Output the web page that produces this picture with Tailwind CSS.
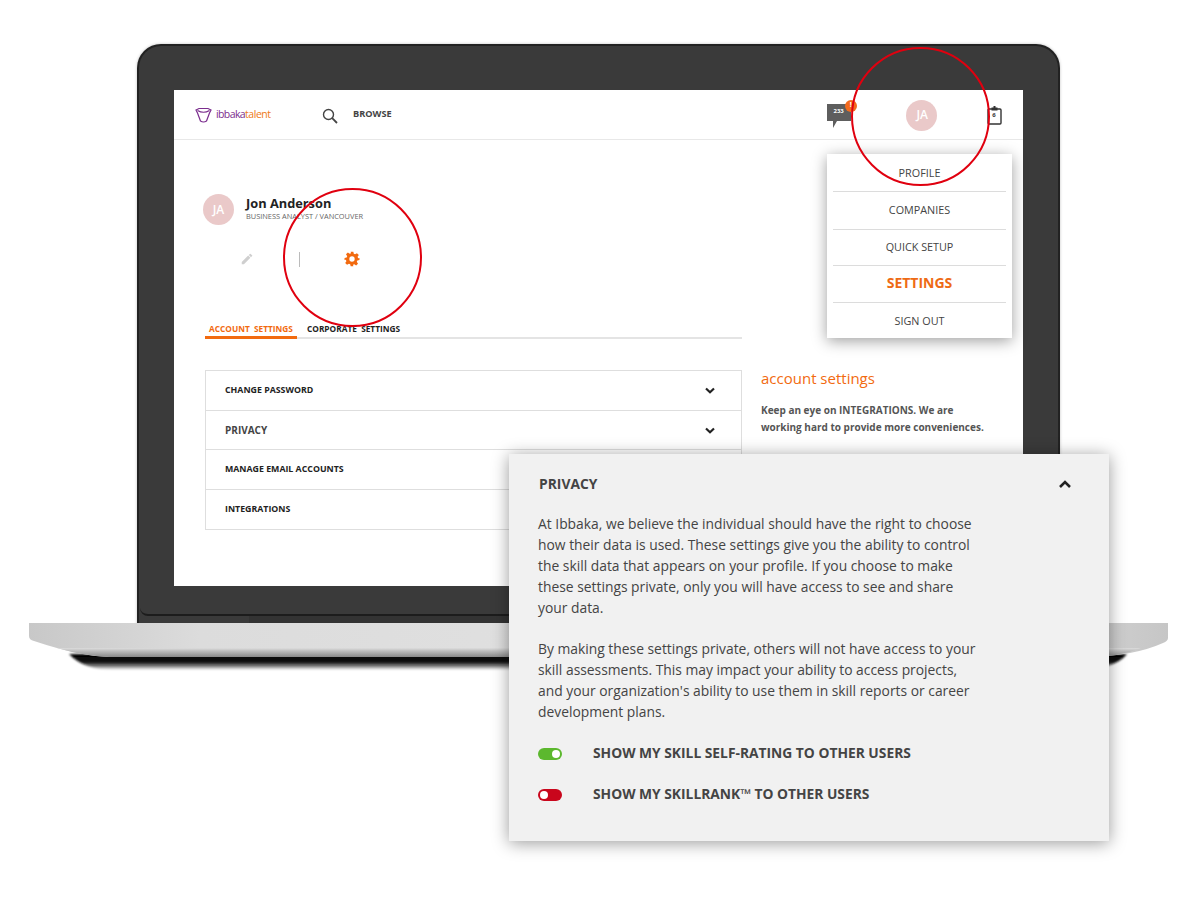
<!DOCTYPE html>
<html>
<head>
<meta charset="utf-8">
<script src="https://cdn.jsdelivr.net/npm/@tailwindcss/browser@4"></script>
</head>
<body class="m-0 bg-white">
<div class="relative w-[1200px] h-[918px] overflow-hidden bg-white font-['Open_Sans',sans-serif] text-[#333]">

  <!-- laptop lid -->
  <div class="absolute left-[137px] top-[44px] w-[923px] h-[581px] bg-[#3a3a3a] rounded-t-[24px] border-[2px] border-b-0 border-[#222] pt-[44px] pl-[35px] shadow-[0_0_3px_rgba(0,0,0,0.25)]">
    <div class="absolute left-[1px] right-[1px] bottom-[9px] h-[16px] rounded-b-[8px] border-b-2 border-[#1c1c1c]"></div>
    <div class="absolute left-[110px] right-0 bottom-0 h-[9px] bg-[#333]"></div>
    <!-- screen -->
    <div class="relative w-[849px] h-[496px] bg-white">
      <!-- app bar -->
      <header class="flex items-center h-[50px] border-b border-[#e8e8e8] pl-[21px]">
        <svg class="w-[17px] h-[16px] mr-[4px]" viewBox="0 0 17 16" fill="none" stroke="#7b2d8e" stroke-width="1.2"><path d="M1 3 L4 1.5 H13 L16 3 L14.5 6 L11.5 14 Q8.5 16 5.5 14 L2.5 6 Z"/><path d="M2.5 3.5 Q8.5 7 14.5 3.5"/></svg>
        <span class="text-[10.5px] tracking-[-0.6px] text-[#7b2d8e] w-[29px]">ibbaka</span><span class="text-[10.5px] tracking-[-0.45px] text-[#ee7a20] w-[25px]">talent</span>
        <svg class="w-[16px] h-[16px] ml-[52px] mt-[3px]" viewBox="0 0 16 16" fill="none" stroke="#444" stroke-width="1.4"><circle cx="6.5" cy="6.5" r="5"/><path d="M10.2 10.2 L15 15" stroke-width="1.8"/></svg>
        <span class="ml-[15px] -mt-[2px] text-[9.2px] font-bold text-[#444]">BROWSE</span>
        <div class="relative ml-[435px] mt-[4px] w-[26px] h-[26px]">
          <svg class="absolute left-0 top-0 w-[26px] h-[26px]" viewBox="0 0 26 26"><path d="M0 0 H24 V17 H10 L6 24 V17 H0 Z" fill="#5e5e5e"/></svg>
          <span class="absolute left-[5px] top-[3px] w-[14px] text-center text-[6px] font-bold text-white">233</span>
          <span class="absolute left-[18px] -top-[4px] w-[12px] h-[12px] rounded-full bg-[#f26b1d] text-white text-[7px] font-bold flex items-center justify-center">!</span>
        </div>
        <div class="ml-[53px] mt-[1px] w-[31px] h-[31px] rounded-full bg-[#eac9c9] text-white text-[12px] font-semibold flex items-center justify-center pl-[2px]">JA</div>
        <svg class="ml-[50px] w-[15px] h-[19px] mt-[2px]" viewBox="0 0 15 19" fill="none"><rect x="1" y="3" width="13" height="15" rx="1" stroke="#333" stroke-width="1.4"/><rect x="4.5" y="1.5" width="6" height="3" fill="#333"/><rect x="6.5" y="0" width="2" height="2" fill="#333"/></svg>
      </header>
      <span class="absolute left-[814px] top-[21px] w-[12px] text-center text-[6px] leading-[8px] font-bold text-[#333]">6</span>

      <!-- content -->
      <div class="pl-[29px] pt-[54px] flex items-center">
        <div class="w-[31px] h-[31px] rounded-full bg-[#eac9c9] text-white text-[12px] font-semibold flex items-center justify-center">JA</div>
        <div class="ml-[12px] -mt-[3px]">
          <div class="text-[12.8px] leading-[15px] font-bold text-[#222]">Jon Anderson</div>
          <div class="text-[7.4px] leading-[10px] text-[#666]">BUSINESS ANALYST / VANCOUVER</div>
        </div>
      </div>
      <div class="flex items-center h-[16px] mt-[26px] pl-[66px]">
        <svg class="w-[14px] h-[14px]" viewBox="0 0 24 24" fill="#cfcfcf"><path d="M3 17.25V21h3.75L17.81 9.94l-3.75-3.75L3 17.25zM20.71 7.04a1 1 0 0 0 0-1.41l-2.34-2.34a1 1 0 0 0-1.41 0l-1.83 1.83 3.75 3.75 1.83-1.83z"/></svg>
        <div class="ml-[45px] w-px h-[15px] bg-[#bbb]"></div>
        <svg class="ml-[44px] w-[16px] h-[16px]" viewBox="0 0 24 24" fill="#f26a0f"><path fill-rule="evenodd" d="M10 1h4l.7 3.2 1.9.8 2.8-1.8 2.8 2.8-1.8 2.8.8 1.9L23.2 10.4v3.2l-3.2.7-.8 1.9 1.8 2.8-2.8 2.8-2.8-1.8-1.9.8L14 23h-4l-.7-3.2-1.9-.8-2.8 1.8-2.8-2.8 1.8-2.8-.8-1.9L.8 13.6v-3.2L4 9.7l.8-1.9L3 5l2.8-2.8L8.6 4l1.9-.8zM12 8a4 4 0 1 0 0 8 4 4 0 0 0 0-8z"/></svg>
      </div>

      <!-- tabs -->
      <div class="ml-[31px] mt-[57px] w-[537px] h-[15px] border-b-2 border-[#e4e4e4] flex">
        <div class="w-[92px] h-[15px] border-b-[3px] border-[#f26a0f] pl-[4px] text-[8.3px] leading-[10px] font-bold text-[#f26a0f] whitespace-pre">ACCOUNT  SETTINGS</div>
        <div class="ml-[10px] text-[8.3px] leading-[10px] font-bold text-[#222] whitespace-pre">CORPORATE  SETTINGS</div>
      </div>

      <div class="flex mt-[31px]">
        <!-- accordion -->
        <div class="ml-[31px] w-[537px] h-[160px] border border-[#dedede] flex flex-col text-[8.8px] font-bold text-[#222]">
          <div class="h-[40px] border-b border-[#dedede] pl-[19px] pr-[26px] flex items-center justify-between">
            <span>CHANGE PASSWORD</span>
            <svg class="w-[10px] h-[7px]" viewBox="0 0 10 7" fill="none" stroke="#222" stroke-width="2.2"><path d="M1 1.5 L5 5.2 L9 1.5"/></svg>
          </div>
          <div class="h-[39px] border-b border-[#dedede] pl-[19px] pr-[26px] flex items-center justify-between text-[#444] text-[10px]">
            <span>PRIVACY</span>
            <svg class="w-[10px] h-[7px]" viewBox="0 0 10 7" fill="none" stroke="#222" stroke-width="2.2"><path d="M1 1.5 L5 5.2 L9 1.5"/></svg>
          </div>
          <div class="h-[40px] border-b border-[#dedede] pl-[19px] flex items-center">MANAGE EMAIL ACCOUNTS</div>
          <div class="h-[39px] pl-[19px] flex items-center">INTEGRATIONS</div>
        </div>
        <!-- aside -->
        <div class="ml-[19px] w-[240px] -mt-[1px]">
          <div class="text-[15px] leading-[18px] text-[#f26a0f]">account settings</div>
          <div class="mt-[15px] text-[10px] leading-[16.5px] font-bold text-[#555]">Keep an eye on INTEGRATIONS. We are<br>working hard to provide more conveniences.</div>
        </div>
      </div>
    </div>
  </div>

  <!-- laptop base -->
  <svg class="absolute left-[29px] top-[620px] w-[1140px] h-[52px]" viewBox="0 0 1140 52">
    <defs>
      <linearGradient id="baseH" x1="0" x2="1" y1="0" y2="0"><stop offset="0" stop-color="#c8c8c8"/><stop offset="0.15" stop-color="#dcdcdc"/><stop offset="0.8" stop-color="#e4e4e4"/><stop offset="1" stop-color="#c6c6c6"/></linearGradient>
      <linearGradient id="baseV" x1="0" x2="0" y1="0" y2="1"><stop offset="0" stop-color="#dcdcdc"/><stop offset="0.35" stop-color="#bdbdbd"/><stop offset="1" stop-color="#8a8a8a"/></linearGradient>
      <linearGradient id="shade" x1="0" x2="0" y1="0" y2="1"><stop offset="0" stop-color="#000"/><stop offset="0.5" stop-color="#111"/><stop offset="1" stop-color="#000" stop-opacity="0"/></linearGradient>
      <filter id="blur"><feGaussianBlur stdDeviation="0.9"/></filter>
    </defs>
    <path d="M40 34 H1098 Q1085 50 1045 50 H85 Q55 50 40 34 Z" fill="url(#shade)" filter="url(#blur)"/>
    <path d="M0 3 H1139 V18 Q1139 21 1134 23 Q1105 36 1060 37 H80 Q50 36 5 21 Q0 20 0 16 Z" fill="url(#baseH)"/>
    <path d="M28 28 H1112 Q1090 37 1060 37 H80 Q55 36 28 28 Z" fill="url(#baseV)"/>
  </svg>

  <!-- dropdown -->
  <nav class="absolute left-[827px] top-[154px] w-[185px] h-[184px] bg-white shadow-[0_3px_14px_rgba(0,0,0,0.38)] px-[6px] flex flex-col text-center text-[10.8px] text-[#444]">
    <div class="h-[38px] border-b border-[#dcdcdc] flex items-center justify-center pt-[2px]">PROFILE</div>
    <div class="h-[38px] border-b border-[#dcdcdc] flex items-center justify-center">COMPANIES</div>
    <div class="h-[36px] border-b border-[#dcdcdc] flex items-center justify-center">QUICK SETUP</div>
    <div class="h-[37px] border-b border-[#dcdcdc] flex items-center justify-center text-[14px] font-bold text-[#ee6a14] pb-[3px]">SETTINGS</div>
    <div class="h-[35px] flex items-center justify-center pt-[2px]">SIGN OUT</div>
  </nav>

  <!-- annotation circles -->
  <div class="absolute left-[851px] top-[47px] w-[139px] h-[139px] rounded-full border-2 border-[#e0000f]"></div>
  <div class="absolute left-[283px] top-[188px] w-[139px] h-[139px] rounded-full border-2 border-[#e0000f]"></div>

  <!-- privacy panel -->
  <section class="absolute left-[509px] top-[454px] w-[600px] h-[387px] bg-[#f1f1f1] shadow-[0_2px_16px_rgba(0,0,0,0.4)] pl-[29px] pr-[38px] pt-[20px] text-[13.85px] text-[#444]">
    <div class="flex items-center justify-between h-[20px] pl-[1px]">
      <span class="text-[13.85px] font-bold text-[#444]">PRIVACY</span>
      <svg class="w-[12px] h-[8px]" viewBox="0 0 12 8" fill="none" stroke="#222" stroke-width="2.6"><path d="M1 7 L6 2 L11 7"/></svg>
    </div>
    <p class="mt-[19px] leading-[21px]">At Ibbaka, we believe the individual should have the right to choose<br>how their data is used. These settings give you the ability to control<br>the skill data that appears on your profile. If you choose to make<br>these settings private, only you will have access to see and share<br>your data.</p>
    <p class="mt-[20px] leading-[21px]">By making these settings private, others will not have access to your<br>skill assessments. This may impact your ability to access projects,<br>and your organization's ability to use them in skill reports or career<br>development plans.</p>
    <div class="mt-[21px] flex items-center h-[21px]">
      <div class="w-[24px] h-[12px] rounded-full bg-[#5cb82e] flex items-center justify-end pr-[2px]"><div class="w-[8px] h-[8px] rounded-full bg-white"></div></div>
      <span class="ml-[31px] text-[13.8px] font-bold">SHOW MY SKILL SELF-RATING TO OTHER USERS</span>
    </div>
    <div class="mt-[20px] flex items-center h-[21px]">
      <div class="w-[24px] h-[12px] rounded-full bg-[#c9061c] flex items-center pl-[2px]"><div class="w-[8px] h-[8px] rounded-full bg-white"></div></div>
      <span class="ml-[31px] text-[13.8px] font-bold">SHOW MY SKILLRANK™ TO OTHER USERS</span>
    </div>
  </section>
</div>
</body>
</html>
